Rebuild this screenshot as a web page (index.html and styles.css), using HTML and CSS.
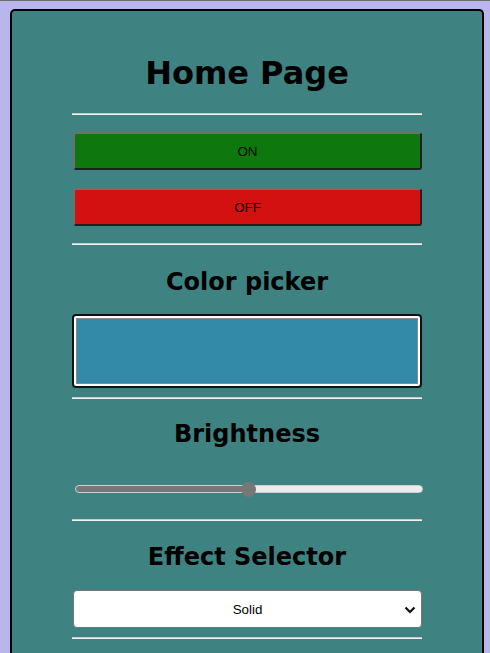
FILE: index.html
```html
<!DOCTYPE html>
<html lang="en">
<head>
<meta charset="utf-8">
<title>Home Page</title>
<link rel="stylesheet" href="styles.css">
</head>
<body>
<main class="card">
  <h1 class="title">Home Page</h1>
  <hr class="rule rule-1">
  <button class="btn btn-on">ON</button>
  <button class="btn btn-off">OFF</button>
  <hr class="rule rule-2">
  <h2 class="section">Color picker</h2>
  <div class="color-box"><div class="swatch"></div></div>
  <hr class="rule rule-3">
  <h2 class="section">Brightness</h2>
  <input class="slider" type="range" min="0" max="255" value="127">
  <hr class="rule rule-4">
  <h2 class="section">Effect Selector</h2>
  <div class="select">
    <span class="select-text">Solid</span>
    <svg class="chev" width="12" height="8" viewBox="0 0 12 8"><path d="M1.5 1.5 L6 6 L10.5 1.5" fill="none" stroke="#111" stroke-width="2.2"/></svg>
  </div>
  <hr class="rule rule-5">
</main>
</body>
</html>
```
FILE: styles.css
```css
html, body {
  margin: 0;
  padding: 0;
  background: #b9b6ec;
  height: 100%;
  overflow: hidden;
}
body {
  border-top: 1px solid #6b6b6b;
  box-sizing: border-box;
}
.card {
  box-sizing: border-box;
  width: 474px;
  height: 644px;
  margin: 8px 0 0 10px;
  border: 2px solid #000;
  border-bottom: none;
  border-radius: 5px 5px 0 0;
  background: #3e8381;
  padding: 43px 60px 0;
  display: flex;
  flex-direction: column;
  overflow: hidden;
  font-family: "DejaVu Sans", Verdana, sans-serif;
}
.title {
  margin: 0;
  font-size: 32px;
  line-height: 38px;
  font-weight: bold;
  text-align: center;
  color: #000;
}
.section {
  margin: 23px 0 0;
  font-size: 24px;
  line-height: 28px;
  font-weight: bold;
  text-align: center;
  color: #000;
}
.rule {
  margin: 0;
  height: 0;
  border: none;
  border-top: 1px solid #c9c9c9;
  border-bottom: 1px solid #f2f2f2;
  width: 350px;
  flex: none;
}
.rule-1 { margin-top: 21px; }
.rule-2 { margin-top: 17px; }
.rule-3 { margin-top: 9px; }
.rule-4 { margin-top: 26px; }
.rule-5 { margin-top: 9px; }
.rule-3 + .section { margin-top: 21px; }
.rule-4 + .section { margin-top: 22px; }

.btn {
  box-sizing: border-box;
  width: 349px;
  margin: 17px 0 0 1px;
  height: 38px;
  flex: none;
  border-radius: 3px;
  border: 2px solid;
  border-color: #6f6f6f #202020 #202020 #6f6f6f;
  font-family: "Liberation Sans", Arial, sans-serif;
  font-size: 13.33px;
  color: #000;
  padding: 0;
}
.btn-on { background: #0e780e; }
.btn-off { background: #d31111; margin-top: 18px; }

.color-box {
  box-sizing: border-box;
  margin-top: 18px;
  height: 74px;
  width: 350px;
  flex: none;
  border: 2px solid #111;
  border-radius: 4px;
  background: #fff;
  padding: 2px;
  display: flex;
}
.swatch {
  flex: 1;
  border: 1px solid #8a8a8a;
  background: #3389a8;
}

.slider {
  -webkit-appearance: none;
  appearance: none;
  margin: 37px 0 0 3px;
  width: 348px;
  height: 8px;
  flex: none;
  border-radius: 4px;
  border: 1px solid #cfcfcf;
  box-sizing: border-box;
  background: linear-gradient(to right, #777 0, #777 50%, #ececec 50%, #ececec 100%);
  outline: none;
}
.slider::-webkit-slider-thumb {
  -webkit-appearance: none;
  appearance: none;
  width: 15px;
  height: 15px;
  border-radius: 50%;
  background: #777;
  border: none;
}

.select {
  box-sizing: border-box;
  margin: 19px 0 0 1px;
  width: 349px;
  height: 38px;
  flex: none;
  border: 1px solid #767676;
  border-radius: 4px;
  background: #fff;
  display: flex;
  align-items: center;
  justify-content: center;
  position: relative;
  font-family: "Liberation Sans", Arial, sans-serif;
  font-size: 13.33px;
  color: #000;
}
.chev {
  position: absolute;
  right: 5px;
  top: 15px;
}
```
